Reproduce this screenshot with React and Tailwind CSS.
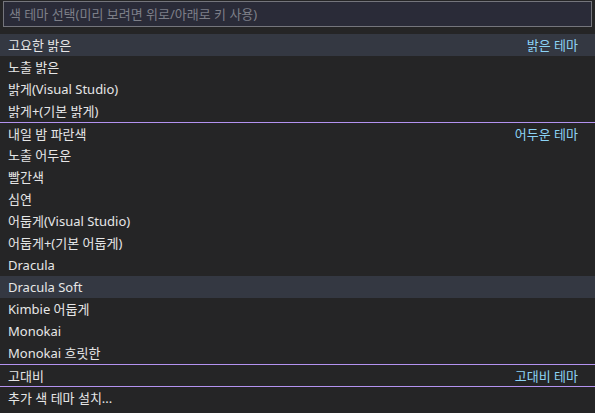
import React from "react";

const groups = [
  {
    label: "밝은 테마",
    items: ["고요한 밝은", "노출 밝은", "밝게(Visual Studio)", "밝게+(기본 밝게)"],
  },
  {
    label: "어두운 테마",
    items: [
      "내일 밤 파란색",
      "노출 어두운",
      "빨간색",
      "심연",
      "어둡게(Visual Studio)",
      "어둡게+(기본 어둡게)",
      "Dracula",
      "Dracula Soft",
      "Kimbie 어둡게",
      "Monokai",
      "Monokai 흐릿한",
    ],
  },
  { label: "고대비 테마", items: ["고대비"] },
];

const selected = ["고요한 밝은", "Dracula Soft"];

function Row({ text, label, top }) {
  const active = selected.includes(text);
  return (
    <div
      className={`flex h-[22px] items-center justify-between pl-2 pr-[17px] ${
        top ? "border-t border-[#b392f0]" : ""
      } ${active ? "bg-[#343842]" : ""}`}
    >
      <span className="text-[#e6e6e6]">{text}</span>
      {label && <span className="text-[#8cd3f5]">{label}</span>}
    </div>
  );
}

export default function App() {
  return (
    <div
      className="h-[413px] w-[595px] overflow-hidden bg-[#252526] text-[13px] leading-[22px]"
      style={{ fontFamily: '"Noto Sans", "Noto Sans CJK KR", sans-serif' }}
    >
      <div className="px-[3px] pt-[1px]">
        <div className="flex h-[26px] items-center border border-[#74757c] bg-[#2a2b38] px-[5px] text-[#7d7f88]">
          색 테마 선택(미리 보려면 위로/아래로 키 사용)
        </div>
      </div>
      <div className="mt-[7px]">
        {groups.map((g, gi) =>
          g.items.map((t, i) => (
            <Row key={t} text={t} label={i === 0 ? g.label : null} top={gi > 0 && i === 0} />
          ))
        )}
        <div className="flex h-[22px] items-center border-t border-[#b392f0] pl-2 text-[#e6e6e6]">
          추가 색 테마 설치...
        </div>
      </div>
    </div>
  );
}
